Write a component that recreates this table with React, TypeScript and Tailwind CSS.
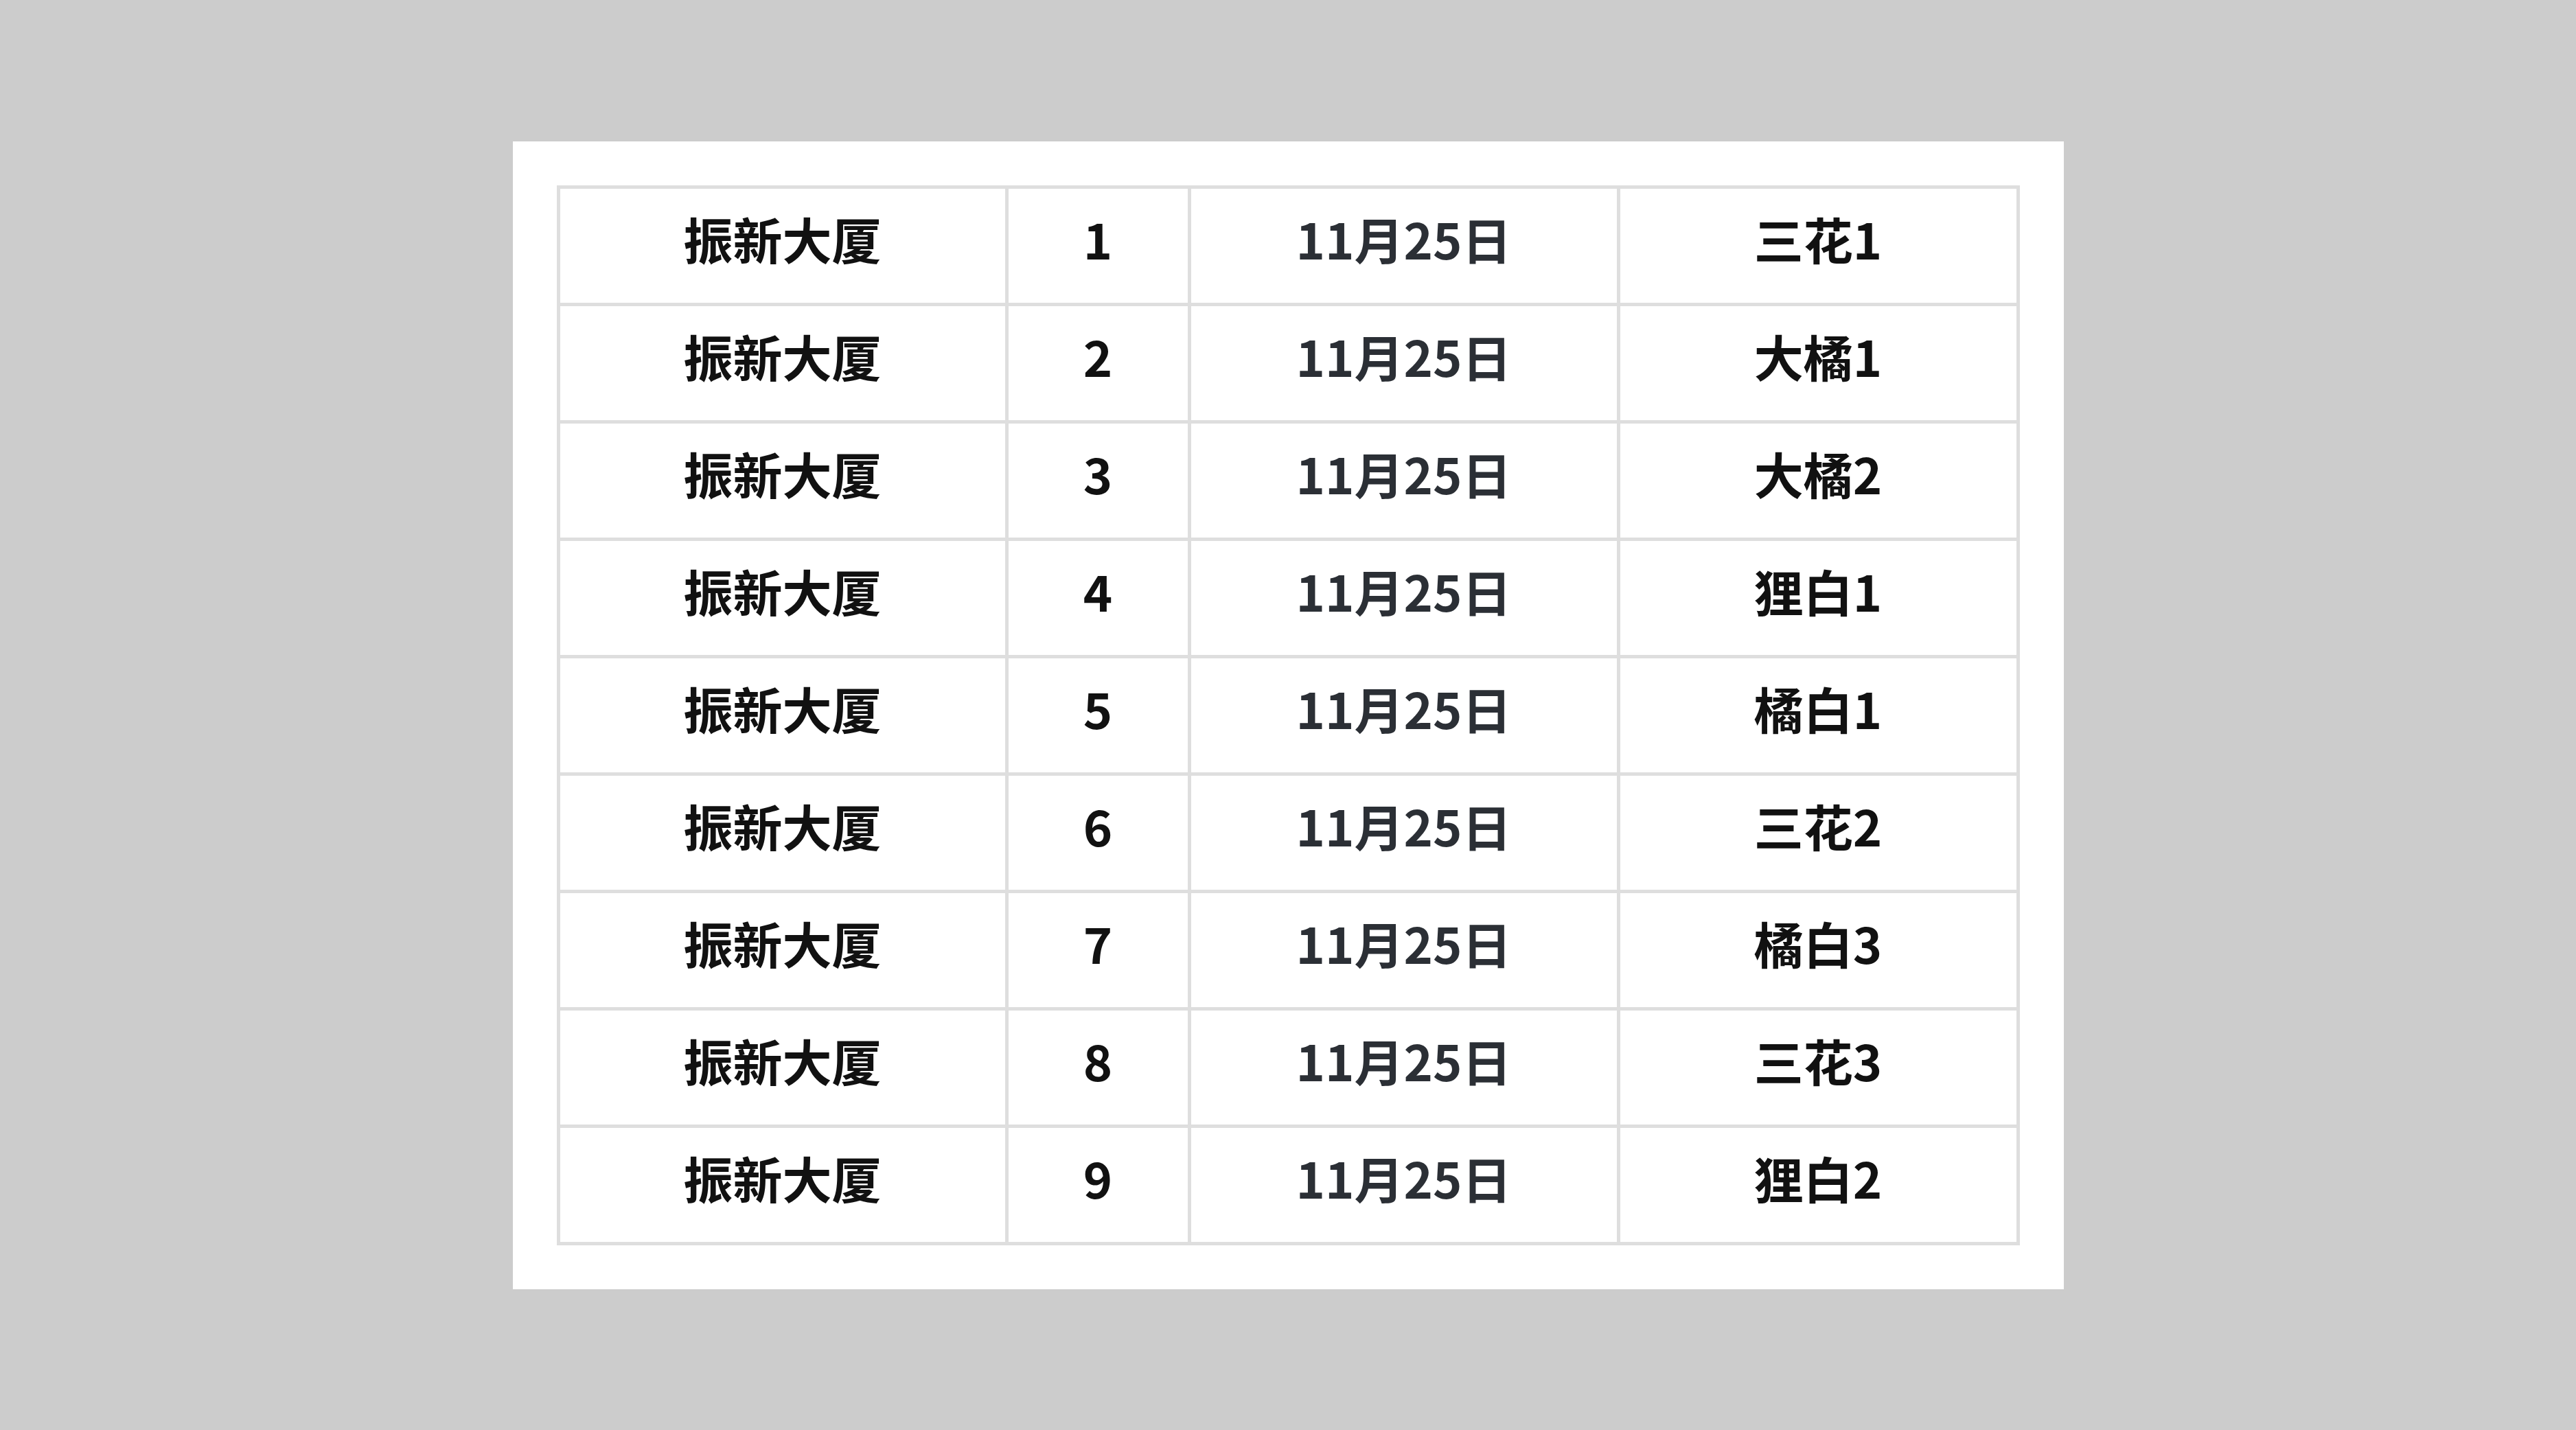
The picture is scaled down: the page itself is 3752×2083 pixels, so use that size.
import React from 'react';

interface Row {
  place: string;
  no: number;
  date: string;
  name: string;
}

const rows: Row[] = [
  { place: '振新大厦', no: 1, date: '11月25日', name: '三花1' },
  { place: '振新大厦', no: 2, date: '11月25日', name: '大橘1' },
  { place: '振新大厦', no: 3, date: '11月25日', name: '大橘2' },
  { place: '振新大厦', no: 4, date: '11月25日', name: '狸白1' },
  { place: '振新大厦', no: 5, date: '11月25日', name: '橘白1' },
  { place: '振新大厦', no: 6, date: '11月25日', name: '三花2' },
  { place: '振新大厦', no: 7, date: '11月25日', name: '橘白3' },
  { place: '振新大厦', no: 8, date: '11月25日', name: '三花3' },
  { place: '振新大厦', no: 9, date: '11月25日', name: '狸白2' },
];

const cell = 'border-[5px] border-[#dedede] px-0 pt-0 pb-[22px] text-center align-middle';

export default function App() {
  return (
    <div
      className="flex h-[2083px] w-[3752px] items-center justify-center bg-[#cccccc]"
      style={{ fontFamily: '"Noto Sans CJK SC", "Noto Sans", sans-serif' }}
    >
      {/* Card */}
      <div className="bg-white p-[64px]">
        <table className="w-[2130px] table-fixed border-collapse text-[72px] leading-none">
          <colgroup>
            <col className="w-[653px]" />
            <col className="w-[266px]" />
            <col className="w-[625px]" />
            <col className="w-[582px]" />
          </colgroup>
          <tbody>
            {rows.map((r) => (
              <tr key={r.no} className="h-[171px]">
                <td className={`${cell} font-bold text-[#111]`}>{r.place}</td>
                <td className={`${cell} font-bold text-[#111]`}>{r.no}</td>
                <td className={`${cell} font-semibold text-[#2b2f35]`}>{r.date}</td>
                <td className={`${cell} font-bold text-[#111]`}>{r.name}</td>
              </tr>
            ))}
          </tbody>
        </table>
      </div>
    </div>
  );
}
